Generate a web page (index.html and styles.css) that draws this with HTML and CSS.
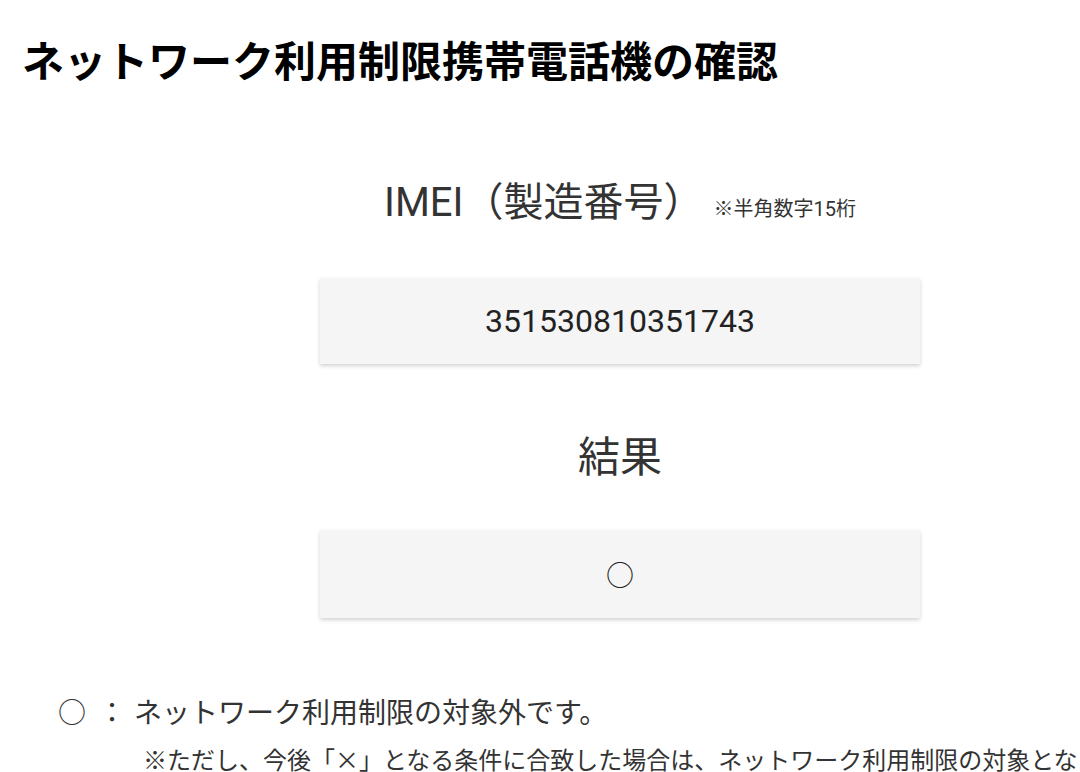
FILE: index.html
```html
<!DOCTYPE html>
<html lang="ja">

<head>
    <meta charset="UTF-8">
    <meta name="viewport" content="width=device-width, initial-scale=1.0">
    <title>ネットワーク利用制限携帯電話機の確認</title>
    <link rel="stylesheet" href="styles.css">
</head>

<body>
    <div class="page">
        <h1 class="title">ネットワーク利用制限携帯電話機の確認</h1>

        <div class="check">
            <h2 class="label">IMEI（製造番号）<span class="note">※半角数字15桁</span></h2>
            <div class="field">351530810351743</div>

            <h2 class="label result-label">結果</h2>
            <div class="field result">○</div>
        </div>

        <ul class="legend">
            <li class="legend-row">
                <span class="mark">○</span>
                <span class="colon">：</span>
                <span class="desc">ネットワーク利用制限の対象外です。</span>
            </li>
            <li class="legend-sub">※ただし、今後「×」となる条件に合致した場合は、ネットワーク利用制限の対象となります。</li>
        </ul>
    </div>
</body>

</html>
```

FILE: styles.css
```css
* {
    margin: 0;
    padding: 0;
}

html,
body {
    overflow: hidden;
    background-color: #fff;
}

body {
    font-family: "Noto Sans CJK JP", "Noto Sans", sans-serif;
    color: #333;
}

li {
    list-style: none;
}

.page {
    width: 1240px;
}

.title {
    margin-top: 34px;
    padding-left: 22px;
    font-size: 42px;
    line-height: 50px;
    font-weight: bold;
    color: #000;
}

.check {
    width: 600px;
    margin: 95px auto 0;
    text-align: center;
}

.label {
    font-family: Roboto, "Noto Sans CJK JP", sans-serif;
    font-size: 40px;
    line-height: 48px;
    font-weight: normal;
    color: #333;
}

.label .note {
    margin-left: 10px;
    font-size: 20px;
}

.field {
    margin-top: 45px;
    height: 86px;
    line-height: 86px;
    background-color: #f5f5f5;
    box-shadow: 0 2px 4px rgba(0, 0, 0, 0.18);
    font-family: Roboto, "Noto Sans CJK JP", sans-serif;
    font-size: 32px;
    color: #222;
}

.result-label {
    margin-top: 69px;
    font-size: 42px;
    line-height: 50px;
}

.field.result {
    margin-top: 47px;
    height: 88px;
    line-height: 88px;
    font-family: "Noto Sans CJK JP", sans-serif;
    font-size: 28px;
}

.legend {
    margin-top: 75px;
    font-size: 28px;
    line-height: 36px;
}

.legend-row {
    display: flex;
    padding-left: 58px;
}

.legend-row .colon {
    margin-left: 12px;
}

.legend-row .desc {
    margin-left: 8px;
}

.legend-sub {
    margin-top: 12px;
    padding-left: 143px;
    font-size: 24px;
    white-space: nowrap;
}
```
